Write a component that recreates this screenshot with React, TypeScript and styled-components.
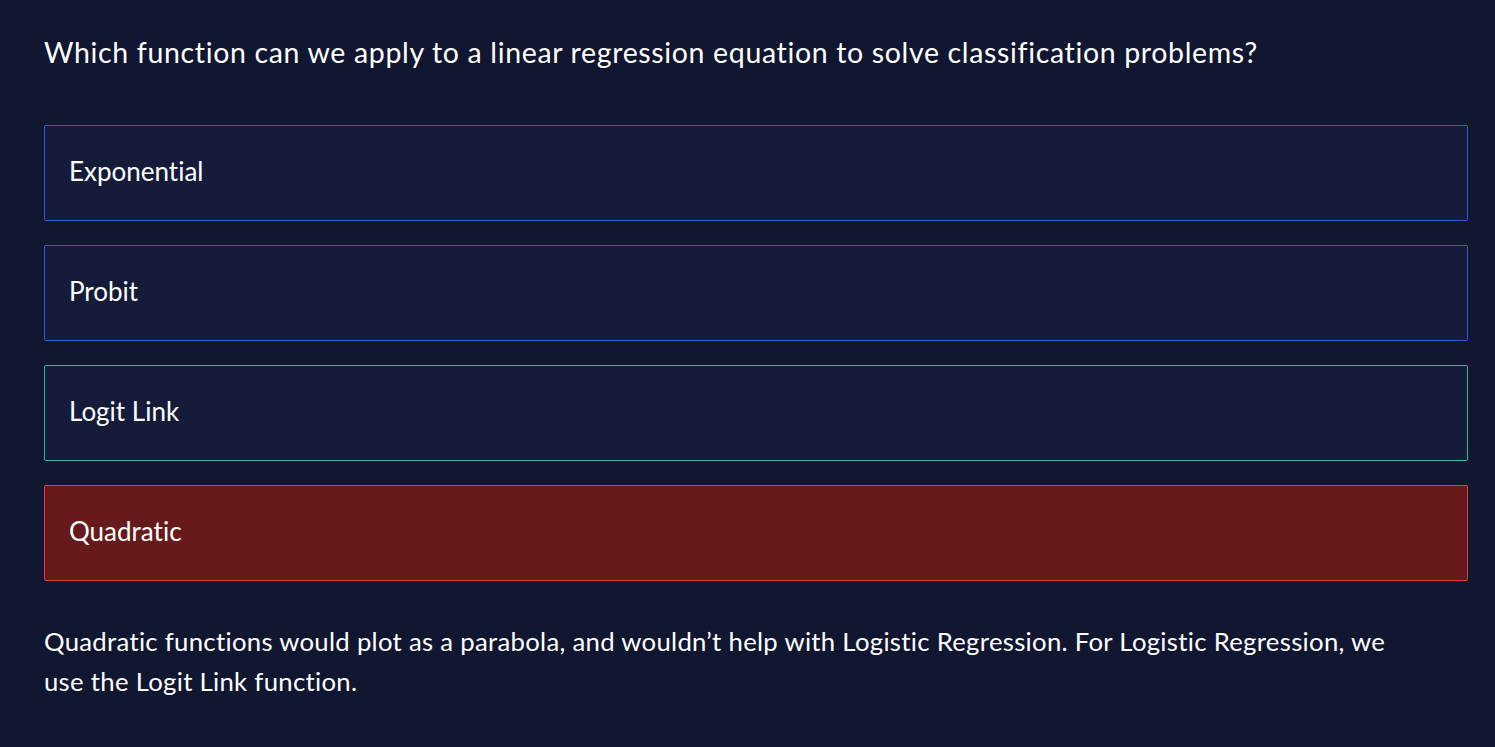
import * as React from 'react';
import styled, { createGlobalStyle } from 'styled-components';

const GlobalStyle = createGlobalStyle`
  html, body {
    margin: 0;
    padding: 0;
    background: #111631;
  }
  body {
    font-family: 'Lato', 'Noto Sans', sans-serif;
    font-variant-ligatures: none;
    color: #ffffff;
  }
`;

type Status = 'idle' | 'correct' | 'wrong';

const borders: Record<Status, string> = {
  idle: '#2d5fd6',
  correct: '#33b68d',
  wrong: '#e23b3b',
};

const fills: Record<Status, string> = {
  idle: '#151c3a',
  correct: '#151c3a',
  wrong: '#671a1c',
};

const Page = styled.main`
  min-height: 100vh;
  box-sizing: border-box;
  padding: 32px 27px 40px 44px;
  display: flex;
  flex-direction: column;
`;

const Question = styled.h2`
  margin: 0 0 53px;
  font-size: 28.5px;
  font-weight: 400;
  line-height: 40px;
  letter-spacing: 0.65px;
`;

const Choices = styled.div`
  display: flex;
  flex-direction: column;
  gap: 24px;
`;

const Choice = styled.button<{ $status: Status }>`
  display: flex;
  align-items: center;
  height: 96px;
  box-sizing: border-box;
  padding: 0 24px 4px;
  border: 1px solid ${p => borders[p.$status]};
  border-radius: 2px;
  background: ${p => fills[p.$status]};
  color: #ffffff;
  font-family: inherit;
  font-variant-ligatures: none;
  font-size: 26px;
  text-align: left;
  cursor: pointer;
`;

const Explanation = styled.p`
  margin: 40px 0 0;
  max-width: 1365px;
  font-size: 25.7px;
  line-height: 40px;
  letter-spacing: 0.3px;
`;

const options: { label: string; status: Status }[] = [
  { label: 'Exponential', status: 'idle' },
  { label: 'Probit', status: 'idle' },
  { label: 'Logit Link', status: 'correct' },
  { label: 'Quadratic', status: 'wrong' },
];

export default function App() {
  return (
    <>
      <GlobalStyle />
      <Page>
        <Question>
          Which function can we apply to a linear regression equation to solve classification problems?
        </Question>
        <Choices>
          {options.map(o => (
            <Choice key={o.label} $status={o.status}>
              {o.label}
            </Choice>
          ))}
        </Choices>
        <Explanation>
          Quadratic functions would plot as a parabola, and wouldn’t help with Logistic Regression. For
          Logistic Regression, we use the Logit Link function.
        </Explanation>
      </Page>
    </>
  );
}
